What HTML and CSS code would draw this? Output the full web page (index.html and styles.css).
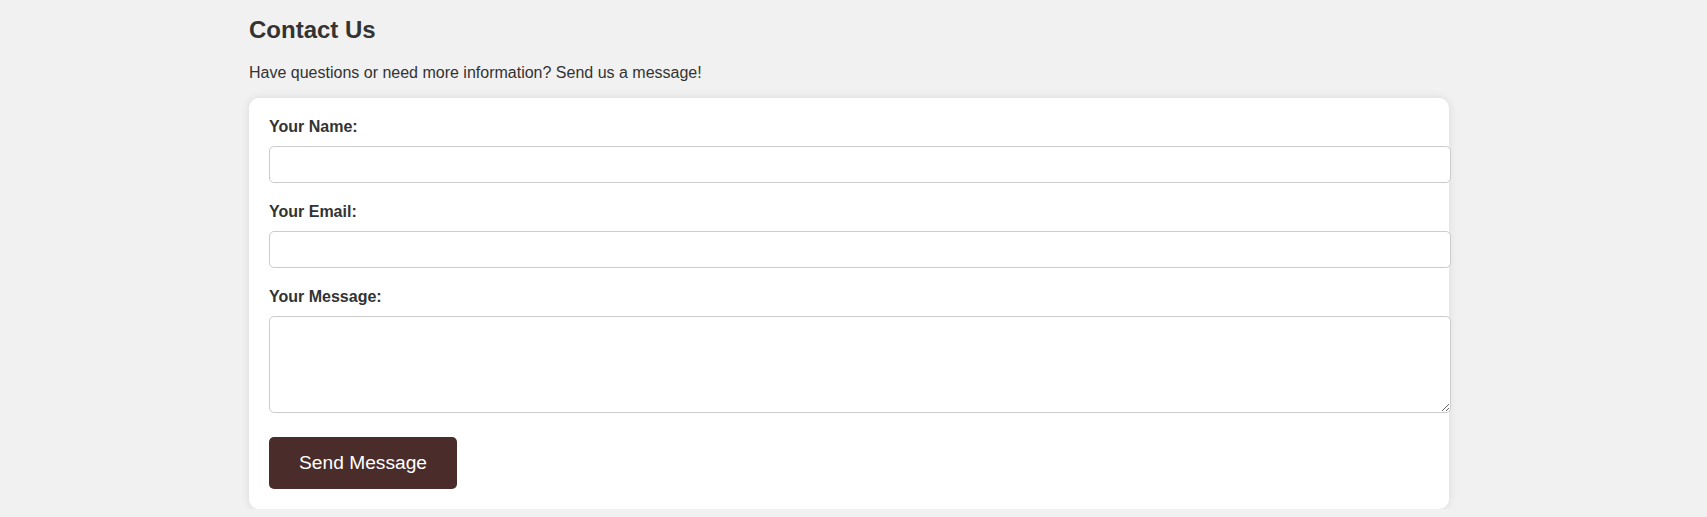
FILE: index.html
```html
<!DOCTYPE html>
<html lang="en">
<head>
<meta charset="utf-8">
<title>Contact Us</title>
<link rel="stylesheet" href="styles.css">
</head>
<body>
<main class="page">
  <section class="contact">
    <h2 class="contact-title">Contact Us</h2>
    <p class="contact-intro">Have questions or need more information? Send us a message!</p>
    <form class="contact-form">
      <label class="field-label" for="name">Your Name:</label>
      <input class="field-input" type="text" id="name" name="name">
      <label class="field-label" for="email">Your Email:</label>
      <input class="field-input" type="email" id="email" name="email">
      <label class="field-label" for="message">Your Message:</label>
      <textarea class="field-input field-textarea" id="message" name="message"></textarea>
      <button class="send-btn" type="submit">Send Message</button>
    </form>
  </section>
</main>
</body>
</html>
```

FILE: styles.css
```css
html, body {
  margin: 0;
  padding: 0;
}

body {
  background: #f1f1f1;
  color: #333;
  font-family: "Liberation Sans", Arial, sans-serif;
  font-size: 16px;
  padding-right: 9px;
}

.page {
  max-width: 1200px;
  margin: 0 auto;
}

.contact-title {
  font-size: 24px;
  font-weight: bold;
  margin: 16px 0 20px;
}

.contact-intro {
  margin: 0 0 16px;
}

.contact-form {
  background: #fff;
  padding: 20px;
  border-radius: 10px;
  box-shadow: 0 0 10px rgba(0, 0, 0, 0.1);
}

.field-label {
  display: block;
  font-weight: bold;
  margin-bottom: 10px;
}

.field-input {
  width: 100%;
  padding: 10px;
  margin-bottom: 20px;
  border: 1px solid #ccc;
  border-radius: 5px;
  font-family: "Liberation Sans", Arial, sans-serif;
  font-size: 13.333px;
  background: #fff;
}

.field-textarea {
  height: 75px;
  vertical-align: baseline;
}

.send-btn {
  display: block;
  background: #4a2c2a;
  color: #fff;
  border: none;
  border-radius: 5px;
  padding: 15px 30px;
  font-family: "Liberation Sans", Arial, sans-serif;
  font-size: 19.2px;
  cursor: pointer;
}
```
